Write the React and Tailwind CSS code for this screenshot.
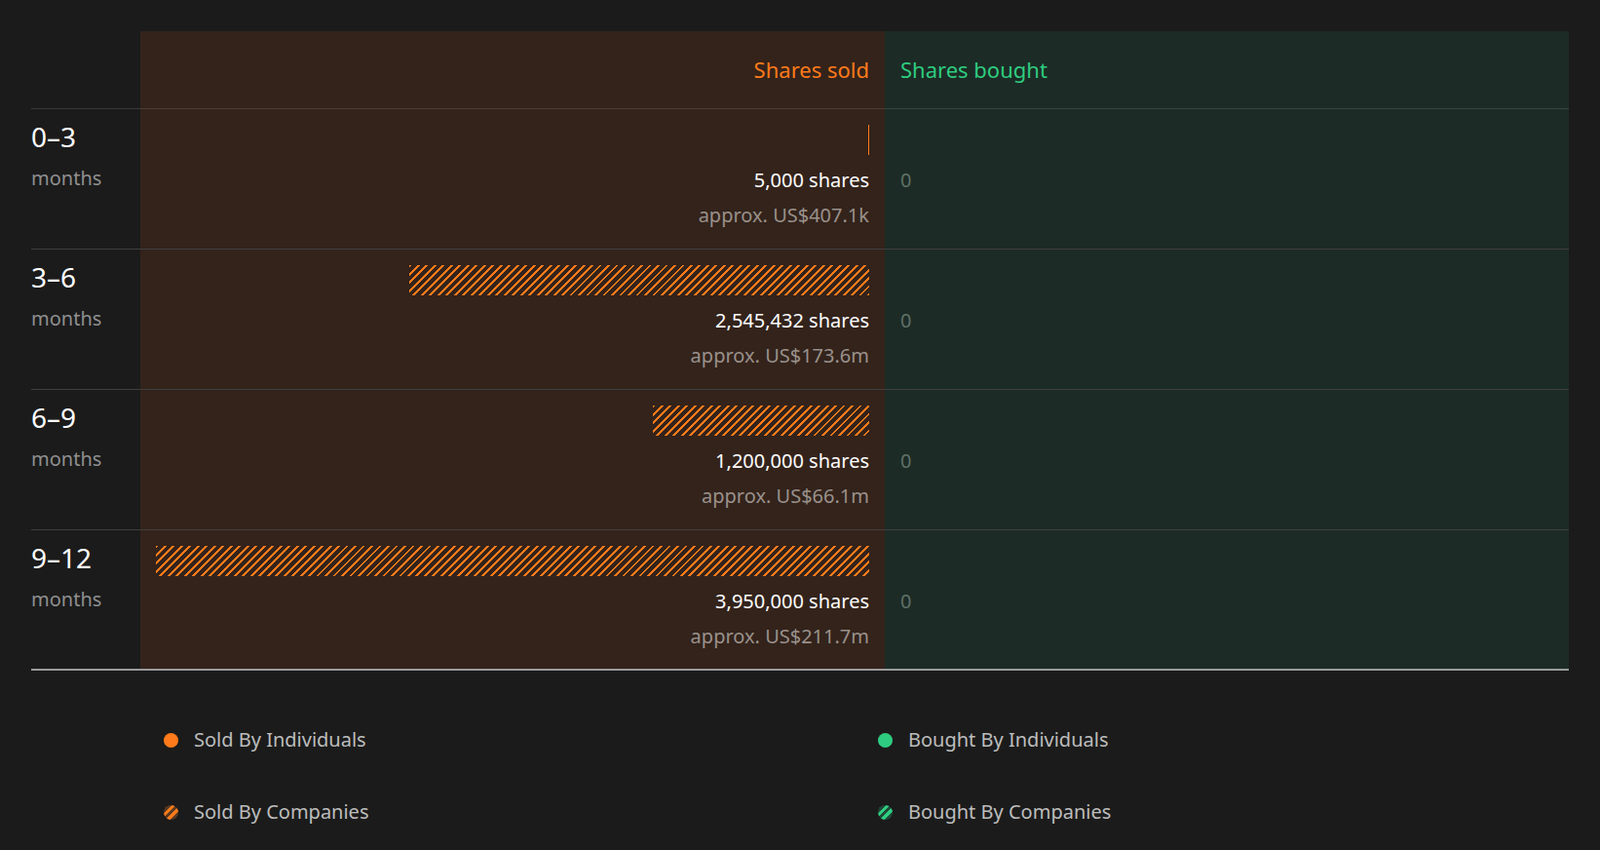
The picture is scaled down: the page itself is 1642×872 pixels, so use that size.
import React from 'react';

const rows = [
  { range: '0–3', shares: 5000, label: '5,000 shares', value: 'approx. US$407.1k', line: true },
  { range: '3–6', shares: 2545432, label: '2,545,432 shares', value: 'approx. US$173.6m' },
  { range: '6–9', shares: 1200000, label: '1,200,000 shares', value: 'approx. US$66.1m' },
  { range: '9–12', shares: 3950000, label: '3,950,000 shares', value: 'approx. US$211.7m' },
];

const MAX = 3950000;
const hatch = 'bg-[repeating-linear-gradient(135deg,#ff7a1a_0_2px,transparent_2px_6px)]';

const App = () => {
  return (
    <div className="w-[1642px] h-[872px] bg-[#1b1b1b] px-8 pt-8 font-['DejaVu_Sans',sans-serif] overflow-hidden">
      <div className="grid grid-cols-[112px_764px_702px]">
        {/* Header */}
        <div className="h-20 border-b border-[#3a3a3a]"></div>
        <div className="h-20 bg-[#33231b] border-b border-[#4a3e37] flex items-center justify-end pr-4 text-[22px] text-[#ff7a1a]">
          Shares sold
        </div>
        <div className="h-20 bg-[#1c2b25] border-b border-[#3a4640] flex items-center pl-4 text-[22px] text-[#2ecc80]">
          Shares bought
        </div>

        {rows.map((r, i) => {
          const last = i === rows.length - 1;
          const border = last ? 'border-b-2 border-[#9a9a9a]' : 'border-b border-[#3f3f3f]';
          return (
            <React.Fragment key={i}>
              <div className={`h-[144px] pt-3 ${border}`}>
                <div className="text-[28px] leading-8 text-white">{r.range}</div>
                <div className="text-[20px] mt-3 text-[#8f8f8f]">months</div>
              </div>
              <div className={`h-[144px] bg-[#33231b] pr-4 pt-4 flex flex-col items-end ${border}`}>
                {r.line ? (
                  <div className="h-[31px] w-px bg-[#ff7a1a]"></div>
                ) : (
                  <div className={`h-[31px] ${hatch}`} style={{ width: `${(r.shares / MAX) * 732}px` }}></div>
                )}
                <div className="mt-3 text-[20px] leading-7 text-white">{r.label}</div>
                <div className="mt-2 text-[20px] leading-7 text-[#9a918b]">{r.value}</div>
              </div>
              <div className={`h-[144px] bg-[#1c2b25] pl-4 pt-[59px] ${border}`}>
                <div className="text-[20px] leading-7 text-[#5f7068]">0</div>
              </div>
            </React.Fragment>
          );
        })}
      </div>

      {/* Legend */}
      <div className="grid grid-cols-[733px_1fr] pl-[136px] mt-[56px] gap-y-[44px] text-[20px] text-[#bdbdbd]">
        <div className="flex items-center gap-4">
          <span className="w-[15px] h-[15px] rounded-full bg-[#ff7a1a]"></span>Sold By Individuals
        </div>
        <div className="flex items-center gap-4">
          <span className="w-[15px] h-[15px] rounded-full bg-[#2ecc80]"></span>Bought By Individuals
        </div>
        <div className="flex items-center gap-4">
          <span className="w-[15px] h-[15px] rounded-full bg-[repeating-linear-gradient(135deg,#ff7a1a_0_3px,#5a3a22_3px_6px)]"></span>Sold By Companies
        </div>
        <div className="flex items-center gap-4">
          <span className="w-[15px] h-[15px] rounded-full bg-[repeating-linear-gradient(135deg,#2ecc80_0_3px,#1f4a38_3px_6px)]"></span>Bought By Companies
        </div>
      </div>
    </div>
  );
};

export default App;
